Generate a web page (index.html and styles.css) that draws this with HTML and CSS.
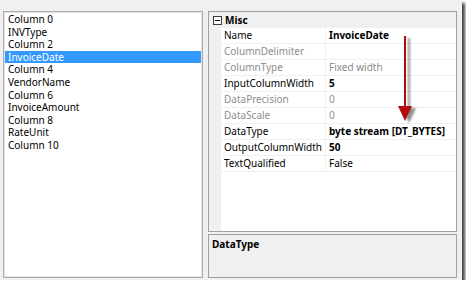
FILE: index.html
```html
<!DOCTYPE html>
<html lang="en">
<head>
  <meta charset="UTF-8" />
  <title>Column Properties</title>
  <link rel="stylesheet" href="styles.css">
</head>
<body>

<div class="frame">
  <ul class="columns">
    <li>Column 0</li>
    <li>INVType</li>
    <li>Column 2</li>
    <li class="selected">InvoiceDate</li>
    <li>Column 4</li>
    <li>VendorName</li>
    <li>Column 6</li>
    <li>InvoiceAmount</li>
    <li>Column 8</li>
    <li>RateUnit</li>
    <li>Column 10</li>
  </ul>

  <div class="props">
    <div class="grid">
      <div class="row category">
        <span class="toggle"></span>
        <span class="cat-name">Misc</span>
      </div>
      <div class="row"><span class="name">Name</span><span class="value bold">InvoiceDate</span></div>
      <div class="row off"><span class="name">ColumnDelimiter</span><span class="value"></span></div>
      <div class="row off"><span class="name">ColumnType</span><span class="value">Fixed width</span></div>
      <div class="row"><span class="name">InputColumnWidth</span><span class="value bold">5</span></div>
      <div class="row off"><span class="name">DataPrecision</span><span class="value">0</span></div>
      <div class="row off"><span class="name">DataScale</span><span class="value">0</span></div>
      <div class="row"><span class="name">DataType</span><span class="value bold">byte stream [DT_BYTES]</span></div>
      <div class="row"><span class="name">OutputColumnWidth</span><span class="value bold">50</span></div>
      <div class="row"><span class="name">TextQualified</span><span class="value">False</span></div>
      <div class="gutter-fill"></div>

      <svg class="arrow" width="24" height="92" viewBox="0 0 24 92">
        <defs>
          <filter id="shade" x="-50%" y="-20%" width="200%" height="140%">
            <feGaussianBlur in="SourceAlpha" stdDeviation="1.2"/>
            <feOffset dx="4" dy="2"/>
            <feComponentTransfer><feFuncA type="linear" slope="0.45"/></feComponentTransfer>
            <feMerge><feMergeNode/><feMergeNode in="SourceGraphic"/></feMerge>
          </filter>
        </defs>
        <g filter="url(#shade)" fill="#b00f0f">
          <rect x="7" y="1" width="2" height="74"/>
          <polygon points="1,71 15,71 8,86"/>
        </g>
      </svg>
    </div>
    <div class="desc">DataType</div>
  </div>
</div>

</body>
</html>
```

FILE: styles.css
```css
body{
  margin:0;
  background:#fff;
  font-family:"Noto Sans", "Open Sans", sans-serif;
  font-size:10px;
  color:#000;
}
.frame{
  width:462px;height:280px;box-sizing:border-box;
  background:#f0f0f0;
  padding:11px 5px 2px 3px;
  display:flex;gap:5px;
  box-shadow:3px 3px 3px #444;
}

/* left list of columns */
.columns{
  list-style:none;margin:0;
  padding:1px 1px;
  width:200px;box-sizing:border-box;
  background:#fff;
  border:1px solid #a9abb0;
  box-shadow:inset 0 0 0 1px #e4e4e6;
}
.columns li{
  height:12.6px;line-height:12.6px;
  padding-left:3px;
  white-space:nowrap;
}
.columns .selected{background:#3399ff;color:#fff;}

/* property grid */
.props{
  flex:1;
  display:flex;flex-direction:column;gap:2px;
}
.grid{
  position:relative;
  flex:1;
  background:#fff;
  border:1px solid #a0a0a0;
  display:flex;flex-direction:column;
}
.row{
  display:flex;
  height:16px;line-height:15px;
  box-sizing:border-box;
  border-bottom:1px solid #f0f0f0;
  margin-left:12px;
}
.row .name{
  width:105px;box-sizing:border-box;
  padding-left:3px;
  border-right:1px solid #f0f0f0;
  white-space:nowrap;overflow:hidden;
}
.row .value{padding-left:3px;white-space:nowrap;}
.bold{font-weight:bold;}
.off{color:#8d8d8d;}

.category{
  margin-left:0;
  background:#f0f0f0;
  border-bottom:none;
  align-items:center;
}
.cat-name{font-weight:bold;padding-left:3px;}
.toggle{
  position:relative;
  width:7px;height:7px;
  margin-left:4px;
  border:1px solid #3c3c3c;
  background:#fff;
}
.toggle::after{
  content:"";position:absolute;
  left:1px;top:3px;width:5px;height:1px;
  background:#000;
}
.gutter-fill{
  flex:1;
  width:12px;
  background:#f0f0f0;
}
.row:not(.category){
  background:linear-gradient(#fff,#fff);
  box-shadow:-12px 0 0 #f0f0f0;
}
.arrow{
  position:absolute;
  left:188px;top:23px;
}

.desc{
  height:44px;box-sizing:border-box;
  background:#f0f0f0;
  border:1px solid #a0a0a0;
  padding:2px 3px;
  font-weight:bold;
}
```
